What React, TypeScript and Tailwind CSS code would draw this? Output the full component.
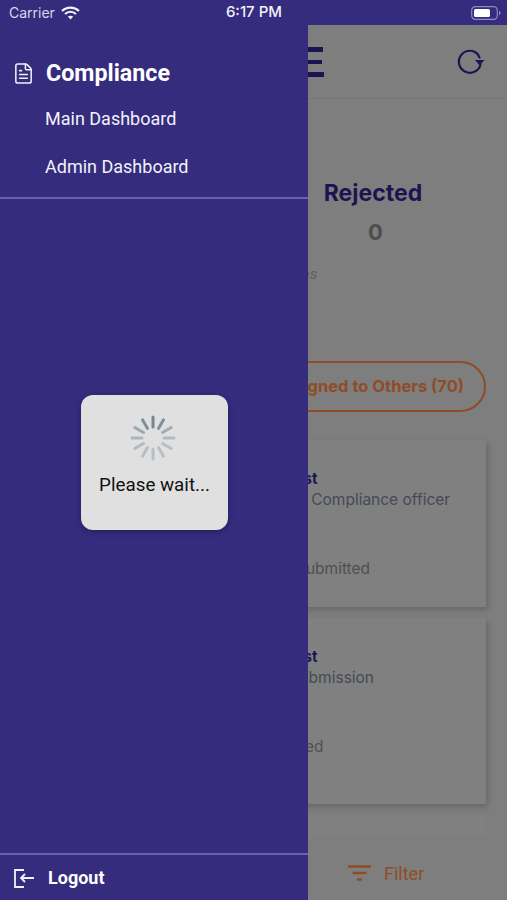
import { FileText } from "lucide-react";

const SPINNER_OPACITY = [0.95, 0.85, 0.55, 0.4, 0.35, 0.35, 0.35, 0.35, 0.4, 0.45, 0.6, 0.85];

function Spinner() {
  return (
    <svg width="46" height="46" viewBox="-23 -23 46 46" className="block">
      {SPINNER_OPACITY.map((opacity, i) => (
        <line
          key={i}
          x1="0"
          y1="-11"
          x2="0"
          y2="-21"
          stroke="#71828e"
          strokeWidth="3"
          strokeLinecap="round"
          opacity={opacity}
          transform={`rotate(${i * 30})`}
        />
      ))}
    </svg>
  );
}

function WifiIcon() {
  return (
    <svg width="19" height="14" viewBox="0 0 19 14" fill="none" stroke="#f2f1f8" strokeWidth="2.2">
      <path d="M1 5 C5.8 0.4 13.2 0.4 18 5" />
      <path d="M4 8 C7.2 5 11.8 5 15 8" />
      <path d="M9.5 13.4 L6.8 10.6 C8.3 9.4 10.7 9.4 12.2 10.6 Z" fill="#f2f1f8" stroke="none" />
    </svg>
  );
}

function BatteryIcon() {
  return (
    <svg width="30" height="14" viewBox="0 0 30 14" fill="none">
      <rect x="0.7" y="0.7" width="25.6" height="12.6" rx="3.6" stroke="#8f88c4" strokeWidth="1.2" />
      <rect x="3" y="3" width="16" height="8" rx="1.6" fill="#ffffff" />
      <path d="M28 5 C29.2 5.4 29.6 6.2 29.6 7 C29.6 7.8 29.2 8.6 28 9 Z" fill="#8f88c4" />
    </svg>
  );
}

function RefreshIcon() {
  return (
    <svg width="28" height="26" viewBox="0 0 28 26" fill="none">
      <path d="M23.4 16 A11 11 0 1 1 19.5 4 C20.8 5 21.8 6.4 22.4 8.5" stroke="#1c1450" strokeWidth="2.2" strokeLinecap="round" />
      <path d="M18 11 L27.5 11 L22.7 16.5 Z" fill="#1c1450" />
    </svg>
  );
}

function LogoutIcon() {
  return (
    <svg width="22" height="22" viewBox="0 0 22 22" fill="none" stroke="#f2f1f8" strokeWidth="1.8">
      <path d="M11 3 H2 V20 H11" />
      <path d="M21 11 H8 M12 7 L8 11 L12 15" />
    </svg>
  );
}

function FilterIcon() {
  return (
    <svg width="23" height="16" viewBox="0 0 23 16" fill="none" stroke="#8f4c26" strokeWidth="2.4">
      <path d="M0 1.5 H23 M4.5 8 H18.5 M9 14.5 H14" />
    </svg>
  );
}

type CardProps = {
  className: string;
  title: string;
  subtitle: string;
  status: string;
  subtitleClass: string;
  statusClass: string;
};

function Card({ className, title, subtitle, status, subtitleClass, statusClass }: CardProps) {
  return (
    <div className={`mr-[21px] ml-[20px] bg-[#808080] shadow-[2px_3px_6px_rgba(0,0,0,0.18)] ${className}`}>
      <div className="pt-[29px] pl-[202px] font-['Inter',sans-serif]">
        <div className="text-[15px] leading-[20px] font-bold whitespace-nowrap text-[#1c1450]">{title}</div>
        <div className={`text-[15.5px] leading-[22px] whitespace-nowrap text-[#454a55] ${subtitleClass}`}>{subtitle}</div>
        <div className={`mt-[47px] text-[15.5px] leading-[22px] whitespace-nowrap text-[#4f4f52] ${statusClass}`}>{status}</div>
      </div>
    </div>
  );
}

export default function App() {
  return (
    <div className="relative flex h-[900px] w-[507px] flex-col overflow-hidden bg-[#7e7e7e] font-['Roboto',sans-serif]">
      {/* Status bar */}
      <div className="flex h-[25px] shrink-0 items-center bg-[#352c7e] pr-[6px] pl-[9px] font-['Inter',sans-serif] text-[14px] text-[#f2f1f8]">
        <span className="text-[#d9d7e8]">Carrier</span>
        <span className="ml-[6px]"><WifiIcon /></span>
        <span className="ml-[146px] text-[15px] font-medium">6:17 PM</span>
        <span className="ml-auto"><BatteryIcon /></span>
      </div>

      <div className="flex min-h-0 flex-1">
        {/* Drawer */}
        <aside className="z-10 flex w-[308px] shrink-0 flex-col bg-[#352c7e] text-[#f2f1f8]">
          <div className="flex items-center pt-[34px] pl-[12px]">
            <FileText size={23} strokeWidth={1.6} />
            <span className="ml-[11px] text-[23.25px] leading-[28px] font-bold text-white">Compliance</span>
          </div>
          <div className="pt-[20px] pl-[45px] text-[18px]">
            <div className="leading-[24px]">Main Dashboard</div>
            <div className="mt-[24px] leading-[24px]">Admin Dashboard</div>
          </div>
          <div className="mt-[18px] h-[2px] bg-[#6a62a8]" />
          <div className="mt-auto flex h-[47px] items-center border-t-2 border-[#6a62a8] pl-[13px]">
            <LogoutIcon />
            <span className="ml-[13px] text-[18px] font-bold text-white">Logout</span>
          </div>
        </aside>

        {/* Page behind the drawer */}
        <main className="min-w-0 flex-1 overflow-hidden">
          <div className="ml-[-308px] flex h-full w-[507px] flex-col">
            <div className="flex h-[74px] shrink-0 items-start justify-between border-b border-[#767676] pr-[22px]">
              <div className="mt-[22px] ml-[300px] flex w-[24px] flex-col gap-[8px]">
                <div className="h-[4.5px] w-[23px] bg-[#1c1450]" />
                <div className="h-[4.5px] w-[22px] bg-[#1c1450]" />
                <div className="h-[4.5px] w-[24px] bg-[#1c1450]" />
              </div>
              <div className="mt-[24px]"><RefreshIcon /></div>
            </div>

            <div className="mt-[79px] ml-[308px] w-[130px] text-center font-['Inter',sans-serif]">
              <div className="text-[23px] leading-[30px] font-bold whitespace-nowrap text-[#1c1450]">Rejected</div>
              <div className="mt-[10px] pl-[5px] text-[22px] leading-[28px] font-bold text-[#4d4d4d]">0</div>
            </div>
            <div className="mt-[18px] ml-[276px] text-[15px] leading-[20px] text-[#5f5f5f] italic">Forms</div>

            <div className="mt-[77px] mr-[21px] ml-[220px] flex h-[51px] shrink-0 items-center justify-end rounded-full border-[2.5px] border-[#8f4c26] pr-[20px] font-['Inter',sans-serif] text-[16.5px] font-bold whitespace-nowrap text-[#8f4c26]">
              Assigned to Others (70)
            </div>

            <Card
              className="mt-[28px] h-[167px] shrink-0"
              title="Test Request"
              subtitle="Sent to a Compliance officer"
              status="Form not submitted"
              subtitleClass="ml-[20px]"
              statusClass="ml-[6px]"
            />
            <Card
              className="mt-[11px] h-[186px] shrink-0"
              title="Test Request"
              subtitle="Pending submission"
              status="Not approved"
              subtitleClass="ml-[5px]"
              statusClass="ml-[2px]"
            />
            <div className="mt-[11px] mr-[21px] ml-[20px] flex-1 bg-[#808080]" />

            <div className="flex h-[65px] shrink-0 items-center bg-[#7e7e7e] pt-[11px] pl-[348px]">
              <FilterIcon />
              <span className="ml-[13px] text-[18px] text-[#8f4c26]">Filter</span>
            </div>
          </div>
        </main>
      </div>

      {/* Loading dialog */}
      <div className="absolute top-[395px] left-[81px] z-20 flex h-[135px] w-[147px] flex-col items-center rounded-[12px] bg-[#e0e0e0] pt-[20px] shadow-[0_2px_6px_rgba(0,0,0,0.3)]">
        <div className="mr-[3px]"><Spinner /></div>
        <div className="mt-[12px] text-[18.8px] leading-[24px] text-[#111111]">Please wait...</div>
      </div>
    </div>
  );
}
